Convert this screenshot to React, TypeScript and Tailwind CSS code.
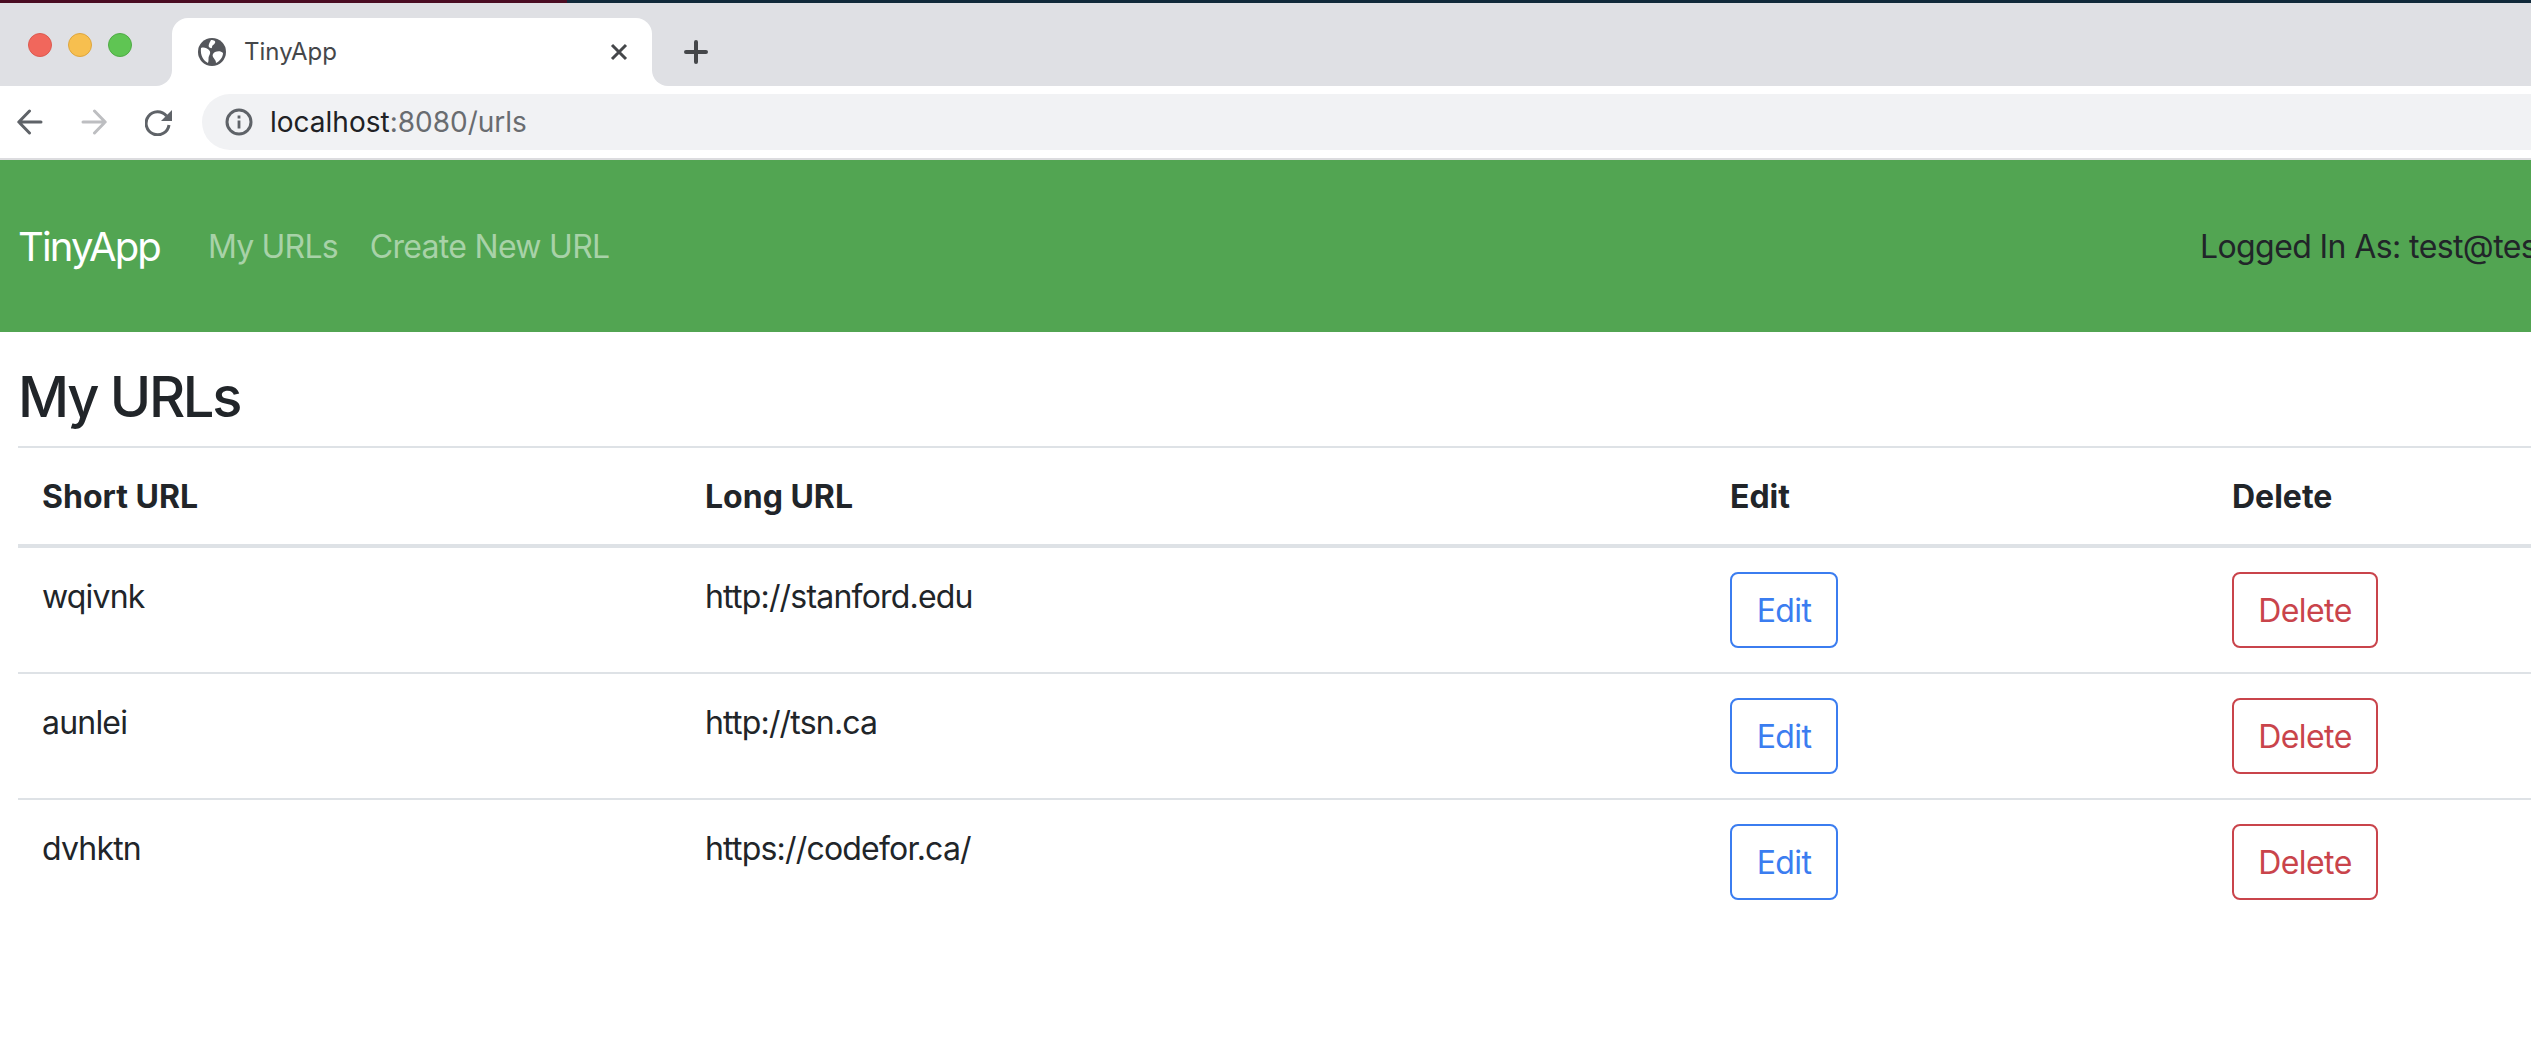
const rows = [
  { short: "wqivnk", long: "http://stanford.edu" },
  { short: "aunlei", long: "http://tsn.ca" },
  { short: "dvhktn", long: "https://codefor.ca/" },
];

const Globe = () => (
  <svg width="28" height="28" viewBox="0 0 28 28">
    <circle cx="14" cy="14" r="14" fill="#54565b" />
    <path d="M3 10C6 9 9 10 11 12C13 14 12 16 11 18C10 20 11 22 10 25C6 23 2 18 3 10z" fill="#fff" />
    <path d="M13 2C16 2 18 3 17 5C16 7 14 7 14 9C14 11 12 10 11 9C10 7 12 4 13 2z" fill="#fff" />
    <path d="M17 14C20 13 23 13 25 15C25 19 22 23 18 25C18 22 16 21 15 19C14 17 15 15 17 14z" fill="#fff" />
  </svg>
);

const BackArrow = ({ color }: { color: string }) => (
  <svg width="26" height="26" viewBox="0 0 26 26" fill="none" stroke={color} strokeWidth="3" strokeLinecap="round" strokeLinejoin="round">
    <path d="M2 13h22M12.5 2 1.8 13l10.7 11" />
  </svg>
);

const ForwardArrow = ({ color }: { color: string }) => (
  <svg width="26" height="26" viewBox="0 0 26 26" fill="none" stroke={color} strokeWidth="3" strokeLinecap="round" strokeLinejoin="round">
    <path d="M24 13H2M13.5 2 24.2 13 13.5 24" />
  </svg>
);

const Reload = () => (
  <svg width="27" height="27" viewBox="0 0 27 27">
    <path d="M21.5 7A11.5 11.5 0 1 0 24 16" fill="none" stroke="#5f6368" strokeWidth="3" />
    <path d="M27 1v11H16z" fill="#5f6368" />
  </svg>
);

const InfoIcon = () => (
  <svg width="28" height="28" viewBox="0 0 28 28">
    <circle cx="14" cy="14" r="12" fill="none" stroke="#5f6368" strokeWidth="3" />
    <rect x="12.6" y="12.5" width="2.8" height="8" fill="#5f6368" />
    <rect x="12.6" y="7.5" width="2.8" height="3" fill="#5f6368" />
  </svg>
);

const CloseIcon = () => (
  <svg width="18" height="18" viewBox="0 0 18 18" stroke="#45474a" strokeWidth="3" fill="none">
    <path d="M2 2l14 14M16 2 2 16" />
  </svg>
);

const PlusIcon = () => (
  <svg width="24" height="24" viewBox="0 0 24 24" stroke="#45474a" strokeWidth="4" strokeLinecap="round" fill="none">
    <path d="M12 2v20M2 12h20" />
  </svg>
);

const App = () => (
  <div className="w-[2531px] h-[1052px] overflow-hidden bg-white text-[#212529] font-['Inter',sans-serif]">
    <div className="h-[3px] flex">
      <div className="w-[567px] bg-[#4a0c22]" />
      <div className="flex-1 bg-[#10293a]" />
    </div>
    <div className="h-[83px] flex bg-white">
      <div className="w-[172px] bg-[#dfe0e4] rounded-br-2xl flex gap-4 pl-7 pt-[30px]">
        <span className="size-6 rounded-full bg-[#f1675c] border border-[#dc5a50]" />
        <span className="size-6 rounded-full bg-[#f7bf4f] border border-[#dea63e]" />
        <span className="size-6 rounded-full bg-[#5fc553] border border-[#50ab46]" />
      </div>
      <div className="w-[480px] bg-[#dfe0e4] pt-[15px]">
        <div className="h-[68px] bg-white rounded-t-2xl flex items-center pl-[26px] pr-[24px]">
          <Globe />
          <span className="ml-[18px] text-[24px] text-[#45474a] flex-1">TinyApp</span>
          <CloseIcon />
        </div>
      </div>
      <div className="flex-1 bg-[#dfe0e4] rounded-bl-2xl pl-[32px] pt-[37px]">
        <PlusIcon />
      </div>
    </div>
    <div className="h-[72px] bg-white flex items-center">
      <div className="w-[202px] flex items-center pl-[17px]">
        <BackArrow color="#5f6368" />
        <span className="ml-[38px]">
          <ForwardArrow color="#bdbec1" />
        </span>
        <span className="ml-[38px]">
          <Reload />
        </span>
      </div>
      <div className="flex-1 h-14 bg-[#f1f2f4] rounded-l-[28px] flex items-center pl-[23px]">
        <InfoIcon />
        <span className="ml-[17px] text-[28px]">
          <span className="text-[#202124]">localhost</span>
          <span className="text-[#696c70]">:8080/urls</span>
        </span>
      </div>
    </div>
    <div className="h-[2px] bg-[#dcdcdf]" />

    <nav className="h-[172px] bg-[#52a552] flex items-center pl-[18px] pt-[2px] whitespace-nowrap">
      <a className="text-[40px] text-white tracking-[-1.85px]">TinyApp</a>
      <a className="ml-[48px] text-[32px] text-[#a8d2a8] tracking-[-0.8px]">My URLs</a>
      <a className="ml-[32px] text-[32px] text-[#a8d2a8] tracking-[-0.7px]">Create New URL</a>
      <span className="ml-auto w-[331px] shrink-0 text-[32px] tracking-[-0.6px]">Logged In As: test@test.com</span>
    </nav>

    <main className="pl-[18px]">
      <h2 className="mt-[32px] mb-[15px] text-[56px] leading-[67px] font-medium tracking-[-2.3px]">My URLs</h2>
      <table className="w-full border-collapse table-fixed text-[32px] leading-[48px] tracking-[-0.8px]">
        <colgroup>
          <col className="w-[663px]" />
          <col className="w-[1025px]" />
          <col className="w-[502px]" />
          <col />
        </colgroup>
        <thead>
          <tr className="border-t-2 border-b-4 border-[#dee2e6]">
            <th className="px-6 pt-[25px] pb-[23px] text-left font-bold tracking-normal">Short URL</th>
            <th className="px-6 pt-[25px] pb-[23px] text-left font-bold tracking-normal">Long URL</th>
            <th className="px-6 pt-[25px] pb-[23px] text-left font-bold tracking-normal">Edit</th>
            <th className="px-6 pt-[25px] pb-[23px] text-left font-bold tracking-normal">Delete</th>
          </tr>
        </thead>
        <tbody>
          {rows.map((r, i) => (
            <tr key={r.short} className={i > 0 ? "border-t-2 border-[#dee2e6]" : ""}>
              <td className="px-6 pt-[25px] pb-[23px] align-top">{r.short}</td>
              <td className="px-6 pt-[25px] pb-[23px] align-top">{r.long}</td>
              <td className="p-6 align-top">
                <button className="block w-[108px] h-[76px] pt-[2px] border-2 border-[#3b7df0] rounded-lg text-[#3b7df0] tracking-[-0.6px]">Edit</button>
              </td>
              <td className="p-6 align-top">
                <button className="block w-[146px] h-[76px] pt-[2px] border-2 border-[#c9444b] rounded-lg text-[#c9444b] tracking-[-0.6px]">Delete</button>
              </td>
            </tr>
          ))}
        </tbody>
      </table>
    </main>
  </div>
);

export default App;
